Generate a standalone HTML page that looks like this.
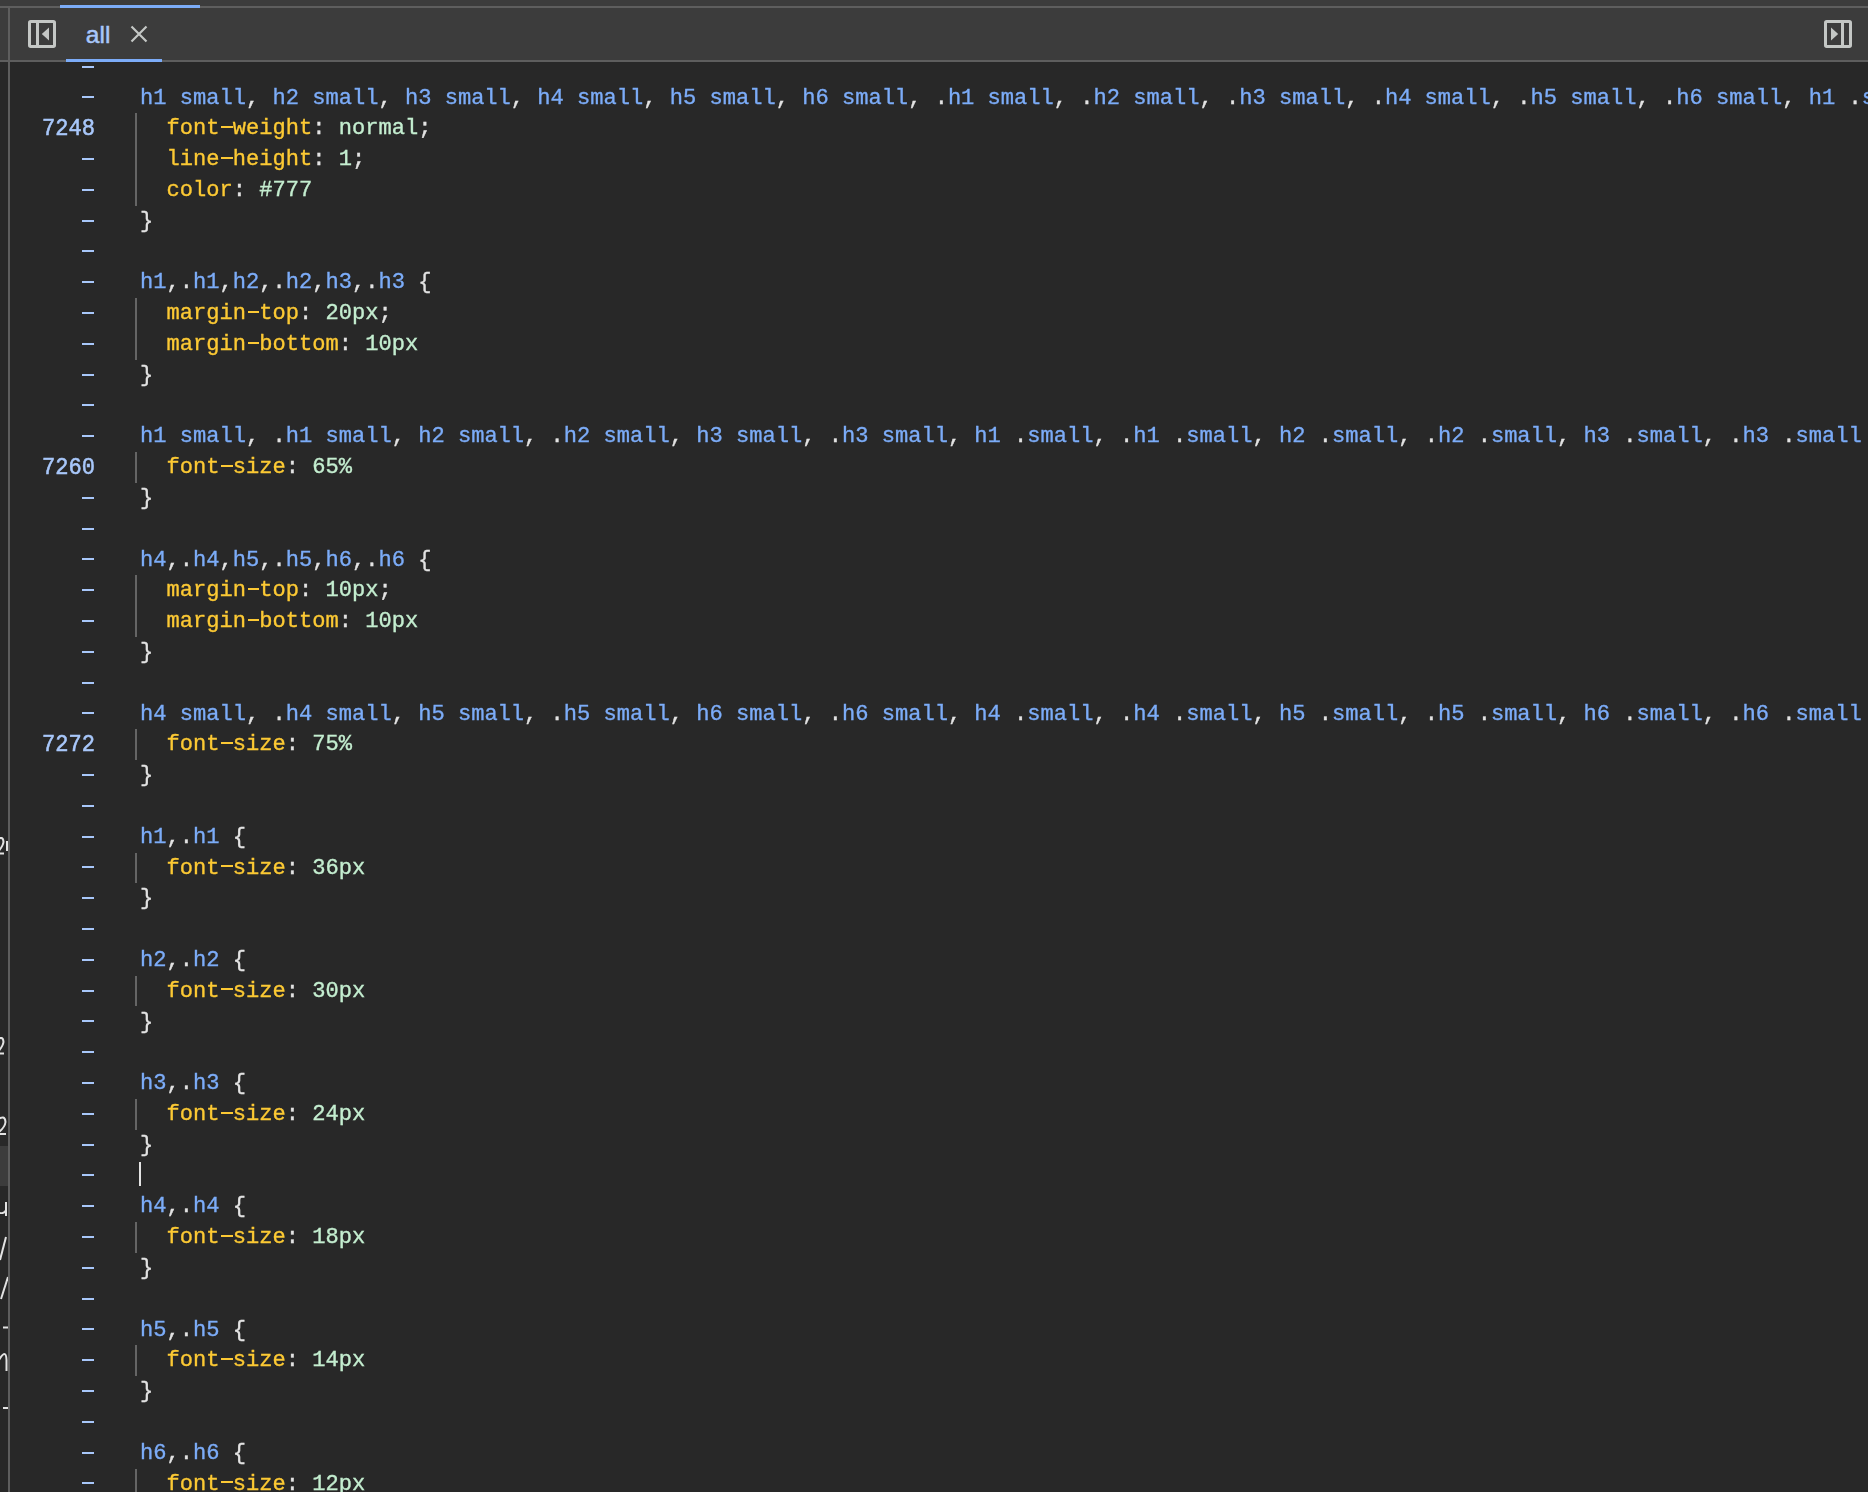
<!DOCTYPE html>
<html><head><meta charset="utf-8"><style>
html,body{margin:0;padding:0;}
body{width:1868px;height:1492px;overflow:hidden;background:#282828;position:relative;font-family:"Liberation Mono",monospace;}
.top{position:absolute;left:0;top:0;width:1868px;height:62px;background:#3c3c3c;}
.hl{position:absolute;left:0;width:1868px;height:2px;background:#5e5e5e;}
.vl{position:absolute;left:8px;top:6px;width:2px;height:1486px;background:#5e5e5e;}
.blue{position:absolute;background:#7cacf8;}
.ed{position:absolute;left:10px;top:62px;width:1858px;height:1430px;overflow:hidden;}
.ed .inner{position:absolute;left:-10px;top:-62px;width:1868px;height:1492px;will-change:transform;}
.t{position:absolute;left:140.1px;height:30.8px;line-height:30.8px;font-size:22.075px;white-space:pre;color:#e3e3e3;-webkit-text-stroke:0.35px currentColor;}
.t i{font-style:normal;color:#e3e3e3;}
.s{color:#7cacf8;}
.p{color:#fcc934;}
.v{color:#c4eed0;}
.hy{position:relative;font-weight:normal;color:transparent;-webkit-text-stroke:0;}
.hy::after{content:'';position:absolute;left:1.5px;width:11.5px;top:9.6px;height:2px;background:#fcc934;}
.ln{position:absolute;left:0;width:95px;text-align:right;transform:scaleY(1.1);transform-origin:0 20.4px;-webkit-text-stroke:0.5px #a8c7fa;height:30.8px;line-height:30.8px;font-size:22.075px;color:#a8c7fa;}
.d{position:absolute;left:82px;width:12px;height:2px;background:#a8c7fa;}
.g{position:absolute;left:135px;width:2px;height:30.8px;background:#656565;}
.tab{position:absolute;left:85.7px;top:17.5px;font-family:"Liberation Sans",sans-serif;font-size:24.5px;line-height:34px;color:#a8c7fa;-webkit-text-stroke:0.5px #a8c7fa;letter-spacing:0.1px;}
</style></head><body>
<div class="top"></div>
<div class="hl" style="top:6px"></div>
<div class="hl" style="top:60px"></div>
<div class="blue" style="left:60px;top:5px;width:140px;height:3px"></div>
<div class="blue" style="left:66px;top:59px;width:96px;height:3px"></div>
<svg style="position:absolute;left:0;top:62px" width="8" height="1430" viewBox="0 62 8 1430">
<rect x="0" y="1146" width="8" height="40" fill="#3c3c3c"/>
<g fill="none" stroke="#e3e3e3" stroke-width="2">
<path d="M-3 840 Q3 835 3.5 842 Q3 846 -2 852"/>
<path d="M-1 853.5 H4"/>
<path d="M7 841 V851"/>
<path d="M-3 1040 Q3 1035 3.5 1042 Q3 1046 -2 1052"/>
<path d="M-1 1053.5 H4"/>
<path d="M-3 1120 Q5 1114 5.5 1122 Q5 1127 -1 1132"/>
<path d="M-1 1134 H6"/>
<path d="M-3 1212 Q4 1215 6 1210 M6 1202 V1216"/>
<path d="M6 1237 L0 1260"/>
<path d="M8 1277 L1 1299"/>
<path d="M3 1327.5 H8"/>
<path d="M-1 1360 Q6 1348 6.5 1360 V1371"/>
<path d="M3 1408 H8"/>
</g>
</svg>
<div class="vl"></div>
<svg style="position:absolute;left:26px;top:18px" width="32" height="32" viewBox="0 0 32 32">
<rect x="3.5" y="3.5" width="25" height="25" rx="1.2" fill="none" stroke="#c4c7c5" stroke-width="3"/>
<rect x="10" y="3" width="3" height="26" fill="#c4c7c5"/>
<path d="M23 9.6 L15.8 16 L23 22.4 Z" fill="#c4c7c5"/>
</svg>
<div class="tab">all</div>
<svg style="position:absolute;left:129px;top:24px" width="20" height="20" viewBox="0 0 20 20">
<path d="M2.5 2.5 L17.5 17.5 M17.5 2.5 L2.5 17.5" stroke="#c4c7c5" stroke-width="2.2"/>
</svg>
<svg style="position:absolute;left:1822px;top:18px" width="32" height="32" viewBox="0 0 32 32">
<rect x="3.5" y="3.5" width="25" height="25" rx="1.2" fill="none" stroke="#c4c7c5" stroke-width="3"/>
<rect x="19" y="3" width="3" height="26" fill="#c4c7c5"/>
<path d="M9 9.5 L16.2 16 L9 22.5 Z" fill="#c4c7c5"/>
</svg>
<div class="ed"><div class="inner">
<div class="d" style="top:66px"></div>
<div class="d" style="top:96px"></div>
<div class="t" style="top:83.6px"><span class="s">h1 small<i>,</i> h2 small<i>,</i> h3 small<i>,</i> h4 small<i>,</i> h5 small<i>,</i> h6 small<i>,</i> <i>.</i>h1 small<i>,</i> <i>.</i>h2 small<i>,</i> <i>.</i>h3 small<i>,</i> <i>.</i>h4 small<i>,</i> <i>.</i>h5 small<i>,</i> <i>.</i>h6 small<i>,</i> h1 <i>.</i>small<i>,</i> h2 <i>.</i>small<i>,</i> h3 <i>.</i>small<i>,</i> h4 <i>.</i>small <i>{</i></span></div>
<div class="ln" style="top:115.0px">7248</div>
<div class="t" style="top:114.4px">  <span class="p">font<b class="hy">-</b>weight</span><i>:</i> <span class="v">normal</span><i>;</i></div>
<div class="g" style="top:113.3px"></div>
<div class="d" style="top:158px"></div>
<div class="t" style="top:145.2px">  <span class="p">line<b class="hy">-</b>height</span><i>:</i> <span class="v">1</span><i>;</i></div>
<div class="g" style="top:144.1px"></div>
<div class="d" style="top:189px"></div>
<div class="t" style="top:176.0px">  <span class="p">color</span><i>:</i> <span class="v">#777</span></div>
<div class="g" style="top:174.9px"></div>
<div class="d" style="top:220px"></div>
<div class="t" style="top:206.8px"><i>}</i></div>
<div class="d" style="top:250px"></div>
<div class="d" style="top:281px"></div>
<div class="t" style="top:268.4px"><span class="s">h1<i>,</i><i>.</i>h1<i>,</i>h2<i>,</i><i>.</i>h2<i>,</i>h3<i>,</i><i>.</i>h3 <i>{</i></span></div>
<div class="d" style="top:312px"></div>
<div class="t" style="top:299.2px">  <span class="p">margin<b class="hy">-</b>top</span><i>:</i> <span class="v">20px</span><i>;</i></div>
<div class="g" style="top:298.1px"></div>
<div class="d" style="top:343px"></div>
<div class="t" style="top:330.0px">  <span class="p">margin<b class="hy">-</b>bottom</span><i>:</i> <span class="v">10px</span></div>
<div class="g" style="top:328.9px"></div>
<div class="d" style="top:374px"></div>
<div class="t" style="top:360.8px"><i>}</i></div>
<div class="d" style="top:404px"></div>
<div class="d" style="top:435px"></div>
<div class="t" style="top:422.4px"><span class="s">h1 small<i>,</i> <i>.</i>h1 small<i>,</i> h2 small<i>,</i> <i>.</i>h2 small<i>,</i> h3 small<i>,</i> <i>.</i>h3 small<i>,</i> h1 <i>.</i>small<i>,</i> <i>.</i>h1 <i>.</i>small<i>,</i> h2 <i>.</i>small<i>,</i> <i>.</i>h2 <i>.</i>small<i>,</i> h3 <i>.</i>small<i>,</i> <i>.</i>h3 <i>.</i>small <i>{</i></span></div>
<div class="ln" style="top:453.8px">7260</div>
<div class="t" style="top:453.2px">  <span class="p">font<b class="hy">-</b>size</span><i>:</i> <span class="v">65%</span></div>
<div class="g" style="top:452.1px"></div>
<div class="d" style="top:497px"></div>
<div class="t" style="top:484.0px"><i>}</i></div>
<div class="d" style="top:528px"></div>
<div class="d" style="top:558px"></div>
<div class="t" style="top:545.6px"><span class="s">h4<i>,</i><i>.</i>h4<i>,</i>h5<i>,</i><i>.</i>h5<i>,</i>h6<i>,</i><i>.</i>h6 <i>{</i></span></div>
<div class="d" style="top:589px"></div>
<div class="t" style="top:576.4px">  <span class="p">margin<b class="hy">-</b>top</span><i>:</i> <span class="v">10px</span><i>;</i></div>
<div class="g" style="top:575.3px"></div>
<div class="d" style="top:620px"></div>
<div class="t" style="top:607.2px">  <span class="p">margin<b class="hy">-</b>bottom</span><i>:</i> <span class="v">10px</span></div>
<div class="g" style="top:606.1px"></div>
<div class="d" style="top:651px"></div>
<div class="t" style="top:638.0px"><i>}</i></div>
<div class="d" style="top:682px"></div>
<div class="d" style="top:712px"></div>
<div class="t" style="top:699.6px"><span class="s">h4 small<i>,</i> <i>.</i>h4 small<i>,</i> h5 small<i>,</i> <i>.</i>h5 small<i>,</i> h6 small<i>,</i> <i>.</i>h6 small<i>,</i> h4 <i>.</i>small<i>,</i> <i>.</i>h4 <i>.</i>small<i>,</i> h5 <i>.</i>small<i>,</i> <i>.</i>h5 <i>.</i>small<i>,</i> h6 <i>.</i>small<i>,</i> <i>.</i>h6 <i>.</i>small <i>{</i></span></div>
<div class="ln" style="top:731.0px">7272</div>
<div class="t" style="top:730.4px">  <span class="p">font<b class="hy">-</b>size</span><i>:</i> <span class="v">75%</span></div>
<div class="g" style="top:729.3px"></div>
<div class="d" style="top:774px"></div>
<div class="t" style="top:761.2px"><i>}</i></div>
<div class="d" style="top:805px"></div>
<div class="d" style="top:836px"></div>
<div class="t" style="top:822.8px"><span class="s">h1<i>,</i><i>.</i>h1 <i>{</i></span></div>
<div class="d" style="top:866px"></div>
<div class="t" style="top:853.6px">  <span class="p">font<b class="hy">-</b>size</span><i>:</i> <span class="v">36px</span></div>
<div class="g" style="top:852.5px"></div>
<div class="d" style="top:897px"></div>
<div class="t" style="top:884.4px"><i>}</i></div>
<div class="d" style="top:928px"></div>
<div class="d" style="top:959px"></div>
<div class="t" style="top:946.0px"><span class="s">h2<i>,</i><i>.</i>h2 <i>{</i></span></div>
<div class="d" style="top:990px"></div>
<div class="t" style="top:976.8px">  <span class="p">font<b class="hy">-</b>size</span><i>:</i> <span class="v">30px</span></div>
<div class="g" style="top:975.7px"></div>
<div class="d" style="top:1020px"></div>
<div class="t" style="top:1007.6px"><i>}</i></div>
<div class="d" style="top:1051px"></div>
<div class="d" style="top:1082px"></div>
<div class="t" style="top:1069.2px"><span class="s">h3<i>,</i><i>.</i>h3 <i>{</i></span></div>
<div class="d" style="top:1113px"></div>
<div class="t" style="top:1100.0px">  <span class="p">font<b class="hy">-</b>size</span><i>:</i> <span class="v">24px</span></div>
<div class="g" style="top:1098.9px"></div>
<div class="d" style="top:1144px"></div>
<div class="t" style="top:1130.8px"><i>}</i></div>
<div class="d" style="top:1174px"></div>
<div class="d" style="top:1205px"></div>
<div class="t" style="top:1192.4px"><span class="s">h4<i>,</i><i>.</i>h4 <i>{</i></span></div>
<div class="d" style="top:1236px"></div>
<div class="t" style="top:1223.2px">  <span class="p">font<b class="hy">-</b>size</span><i>:</i> <span class="v">18px</span></div>
<div class="g" style="top:1222.1px"></div>
<div class="d" style="top:1267px"></div>
<div class="t" style="top:1254.0px"><i>}</i></div>
<div class="d" style="top:1298px"></div>
<div class="d" style="top:1328px"></div>
<div class="t" style="top:1315.6px"><span class="s">h5<i>,</i><i>.</i>h5 <i>{</i></span></div>
<div class="d" style="top:1359px"></div>
<div class="t" style="top:1346.4px">  <span class="p">font<b class="hy">-</b>size</span><i>:</i> <span class="v">14px</span></div>
<div class="g" style="top:1345.3px"></div>
<div class="d" style="top:1390px"></div>
<div class="t" style="top:1377.2px"><i>}</i></div>
<div class="d" style="top:1421px"></div>
<div class="d" style="top:1452px"></div>
<div class="t" style="top:1438.8px"><span class="s">h6<i>,</i><i>.</i>h6 <i>{</i></span></div>
<div class="d" style="top:1482px"></div>
<div class="t" style="top:1469.6px">  <span class="p">font<b class="hy">-</b>size</span><i>:</i> <span class="v">12px</span></div>
<div class="g" style="top:1468.5px"></div>
<div style="position:absolute;left:139px;top:1162px;width:2px;height:24px;background:#e3e3e3"></div>
</div></div>
</body></html>
